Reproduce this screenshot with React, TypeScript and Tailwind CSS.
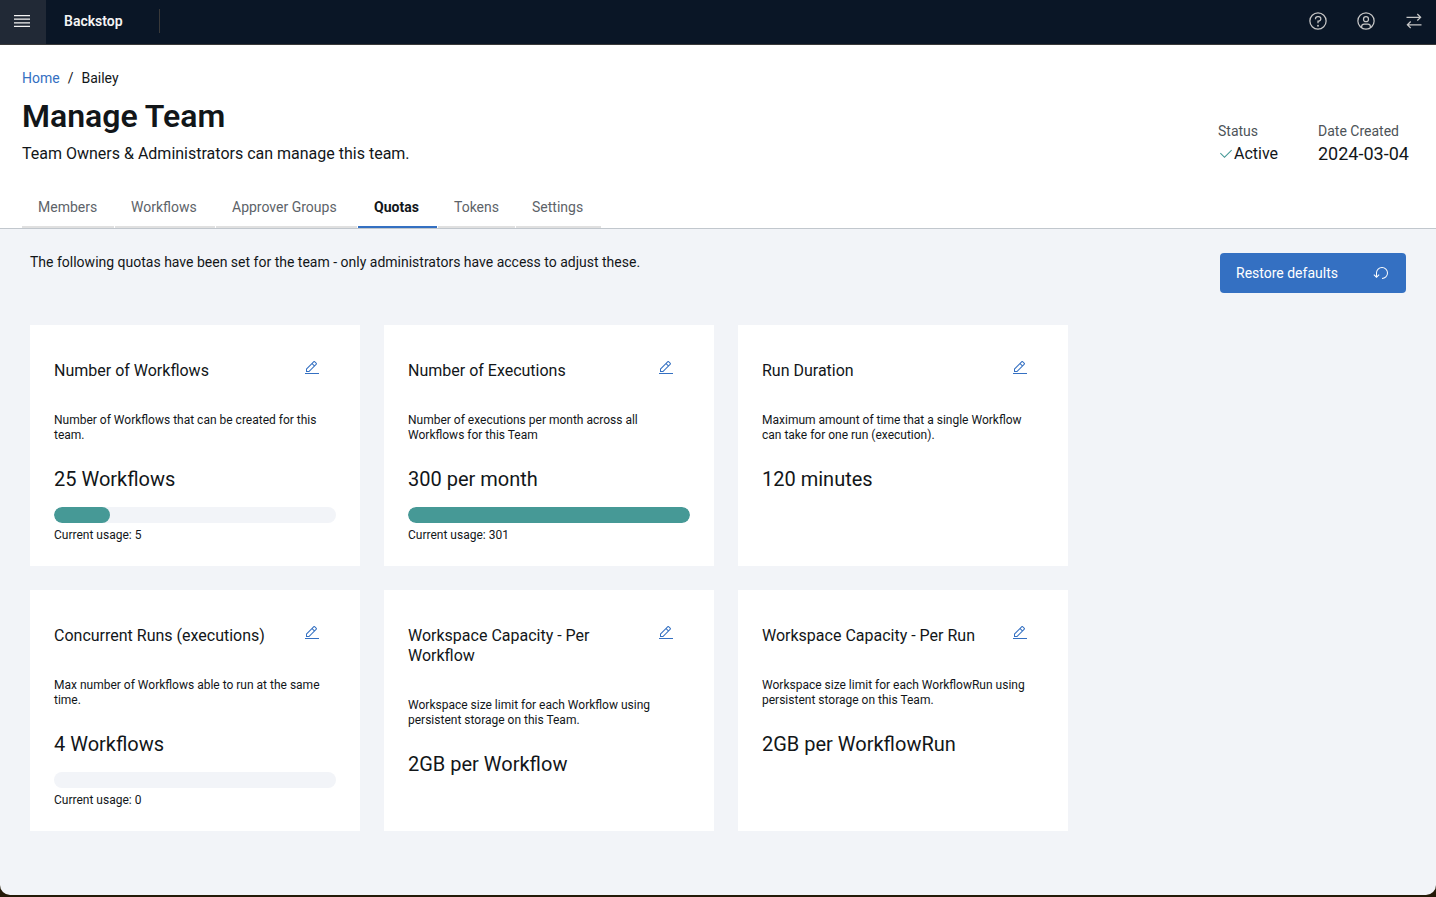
import type { ReactNode } from 'react'

interface Usage { current: number; percent: number }
interface Quota {
  id: string
  title: string
  description: string
  value: string
  usage?: Usage
}

const QUOTAS: Quota[] = [
  {
    id: 'workflows',
    title: 'Number of Workflows',
    description: 'Number of Workflows that can be created for this team.',
    value: '25 Workflows',
    usage: { current: 5, percent: 20 },
  },
  {
    id: 'executions',
    title: 'Number of Executions',
    description: 'Number of executions per month across all Workflows for this Team',
    value: '300 per month',
    usage: { current: 301, percent: 100 },
  },
  {
    id: 'duration',
    title: 'Run Duration',
    description: 'Maximum amount of time that a single Workflow can take for one run (execution).',
    value: '120 minutes',
  },
  {
    id: 'concurrent',
    title: 'Concurrent Runs (executions)',
    description: 'Max number of Workflows able to run at the same time.',
    value: '4 Workflows',
    usage: { current: 0, percent: 0 },
  },
  {
    id: 'workflow-storage',
    title: 'Workspace Capacity - Per Workflow',
    description: 'Workspace size limit for each Workflow using persistent storage on this Team.',
    value: '2GB per Workflow',
  },
  {
    id: 'run-storage',
    title: 'Workspace Capacity - Per Run',
    description: 'Workspace size limit for each WorkflowRun using persistent storage on this Team.',
    value: '2GB per WorkflowRun',
  },
]

const TABS = [
  { label: 'Members', width: 'w-[92px]' },
  { label: 'Workflows', width: 'w-[100px]' },
  { label: 'Approver Groups', width: 'w-[141px]' },
  { label: 'Quotas', width: 'w-[79px]', active: true },
  { label: 'Tokens', width: 'w-[77px]' },
  { label: 'Settings', width: 'w-[85px]' },
]

function Icon({ className, children }: { className: string; children: ReactNode }) {
  return (
    <svg viewBox="0 0 32 32" fill="currentColor" aria-hidden="true" className={`shrink-0 ${className}`}>
      {children}
    </svg>
  )
}

function HeaderButton({ label, children }: { label: string; children: ReactNode }) {
  return (
    <button aria-label={label} className="w-11 h-full flex items-center justify-center pb-0.5 text-[#c6c6c6] hover:bg-[#212936]">
      <Icon className="size-5">{children}</Icon>
    </button>
  )
}

function Header() {
  return (
    <header className="flex items-center h-[45px] bg-[#0a1626] border-b border-[#393939]">
      <button aria-label="Open menu" className="w-[46px] h-full bg-[#212936] text-[#f4f4f4] flex items-center pl-3 pb-0.5">
        <svg viewBox="0 0 20 20" fill="currentColor" aria-hidden="true" className="size-5">
          <path d="M2 14.8H18V16H2zM2 11.2H18V12.4H2zM2 7.6H18V8.8H2zM2 4H18V5.2H2z" />
        </svg>
      </button>
      <a href="#" className="ml-[18px] pb-0.5 text-sm font-semibold text-[#f4f4f4]">Backstop</a>
      <span className="ml-9 mb-0.5 w-px h-6 bg-[#393939]" />
      <div className="ml-auto h-full flex gap-1">
        <HeaderButton label="Help">
          <path d="M16 2a14 14 0 1 0 14 14A14 14 0 0 0 16 2Zm0 26a12 12 0 1 1 12-12 12 12 0 0 1-12 12Z" />
          <circle cx="16" cy="23.5" r="1.5" />
          <path d="M17 8h-1.5A4.49 4.49 0 0 0 11 12.49V13h2v-.5a2.5 2.5 0 0 1 2.5-2.5H17a2.5 2.5 0 0 1 0 5h-2v4.5h2V17a4.5 4.5 0 0 0 0-9Z" />
        </HeaderButton>
        <HeaderButton label="Profile">
          <path d="M16 8a5 5 0 1 0 5 5 5 5 0 0 0-5-5Zm0 8a3 3 0 1 1 3-3 3 3 0 0 1-3 3Z" />
          <path d="M16 2a14 14 0 1 0 14 14A14 14 0 0 0 16 2Zm-6 24.38V25a3 3 0 0 1 3-3h6a3 3 0 0 1 3 3v1.38a11.9 11.9 0 0 1-12 0Zm13.99-1.45A5 5 0 0 0 19 20h-6a5 5 0 0 0-4.99 4.93 12 12 0 1 1 15.98 0Z" />
        </HeaderButton>
        <HeaderButton label="Switch team">
          <path d="M11.41 26.59 7.83 23H28v-2H7.83l3.58-3.59L10 16l-6 6 6 6 1.41-1.41zM28 10l-6-6-1.41 1.41L24.17 9H4v2h20.17l-3.58 3.59L22 16l6-6z" />
        </HeaderButton>
      </div>
    </header>
  )
}

function TeamHeader() {
  return (
    <section className="bg-white border-b border-[#c1c7cd] px-[22px] pt-[23px]">
      <nav aria-label="Breadcrumb">
        <ol className="flex gap-2 text-sm">
          <li><a href="#" className="text-[#3470c2] hover:underline">Home</a></li>
          <li aria-hidden="true">/</li>
          <li>Bailey</li>
        </ol>
      </nav>
      <div className="mt-2 flex justify-between items-end">
        <div>
          <h1 className="text-[32px] leading-10 font-semibold">Manage Team</h1>
          <p className="mt-1.5 text-base">Team Owners &amp; Administrators can manage this team.</p>
        </div>
        <dl className="grid grid-cols-[60px_96px] gap-x-10">
          <div>
            <dt className="text-sm text-[#4d5358]">Status</dt>
            <dd className="mt-px flex items-center text-base">
              <Icon className="size-4 text-[#469996]">
                <path d="M13 24 4 15l1.41-1.41L13 21.17 26.59 7.59 28 9 13 24z" />
              </Icon>
              Active
            </dd>
          </div>
          <div>
            <dt className="text-sm text-[#4d5358]">Date Created</dt>
            <dd className="mt-px text-lg leading-6 whitespace-nowrap">2024-03-04</dd>
          </div>
        </dl>
      </div>
      <nav aria-label="Team" className="mt-[22px] flex gap-px">
        {TABS.map(t => (
          <a
            key={t.label}
            href="#"
            aria-current={t.active ? 'page' : undefined}
            className={`${t.width} h-10 flex items-center px-4 text-sm whitespace-nowrap border-b-2 ${t.active ? 'font-bold border-[#3470c2]' : 'text-[#5d6369] border-[#e0e0e0]'}`}
          >
            {t.label}
          </a>
        ))}
      </nav>
    </section>
  )
}

function QuotaCard({ quota }: { quota: Quota }) {
  const { title, description, value, usage } = quota
  return (
    <article className="bg-white px-6 pt-[35px] pb-[23px]">
      <div className="flex items-start justify-between">
        <h2 className="flex-1 pt-px text-base leading-5">{title}</h2>
        <button aria-label={`Edit ${title}`} className="w-12 flex justify-center text-[#3470c2]">
          <Icon className="size-4">
            <path d="M2 26H30V28H2zM25.4 9c.8-.8.8-2 0-2.8l-3.6-3.6c-.8-.8-2-.8-2.8 0l-15 15V24h6.4L25.4 9zM20.4 4 24 7.6l-3 3L17.4 7l3-3zM6 22v-3.6l10-10 3.6 3.6-10 10H6z" />
          </Icon>
        </button>
      </div>
      <p className="mt-8 pr-1 text-xs leading-[15px]">{description}</p>
      <p className="mt-[22px] text-xl leading-7">{value}</p>
      {usage && (
        <>
          <div
            role="progressbar"
            aria-label={`${title} usage`}
            aria-valuenow={usage.percent}
            className="mt-3.5 h-4 rounded-full bg-[#f2f4f8] overflow-hidden"
          >
            <div className="h-full rounded-full bg-[#469996]" style={{ width: `${usage.percent}%` }} />
          </div>
          <p className="mt-[5px] text-xs leading-[15px]">Current usage: {usage.current}</p>
        </>
      )}
    </article>
  )
}

export default function App() {
  return (
    <div className="min-h-screen flex flex-col pb-0.5 bg-[#241a08] text-[#121619] font-['Roboto',sans-serif]">
      <div className="flex-1 flex flex-col bg-[#f2f4f8] rounded-b-[10px]">
        <Header />
        <TeamHeader />
        <main className="px-[30px] py-6">
          <div className="flex items-start justify-between">
            <p className="text-sm leading-[18px]">
              The following quotas have been set for the team - only administrators have access to adjust these.
            </p>
            <button className="w-[186px] h-10 pl-4 pr-[17px] flex items-center justify-between rounded bg-[#3470c2] text-sm text-white hover:bg-[#2b5fa6]">
              Restore defaults
              <Icon className="size-4">
                <path d="M18 28A12 12 0 1 0 6 16v6.2l-3.6-3.6L1 20l6 6 6-6-1.4-1.4L8 22.2V16a10 10 0 1 1 10 10Z" />
              </Icon>
            </button>
          </div>
          <div className="mt-8 grid grid-cols-[repeat(auto-fill,330px)] gap-6">
            {QUOTAS.map(q => <QuotaCard key={q.id} quota={q} />)}
          </div>
        </main>
      </div>
    </div>
  )
}
